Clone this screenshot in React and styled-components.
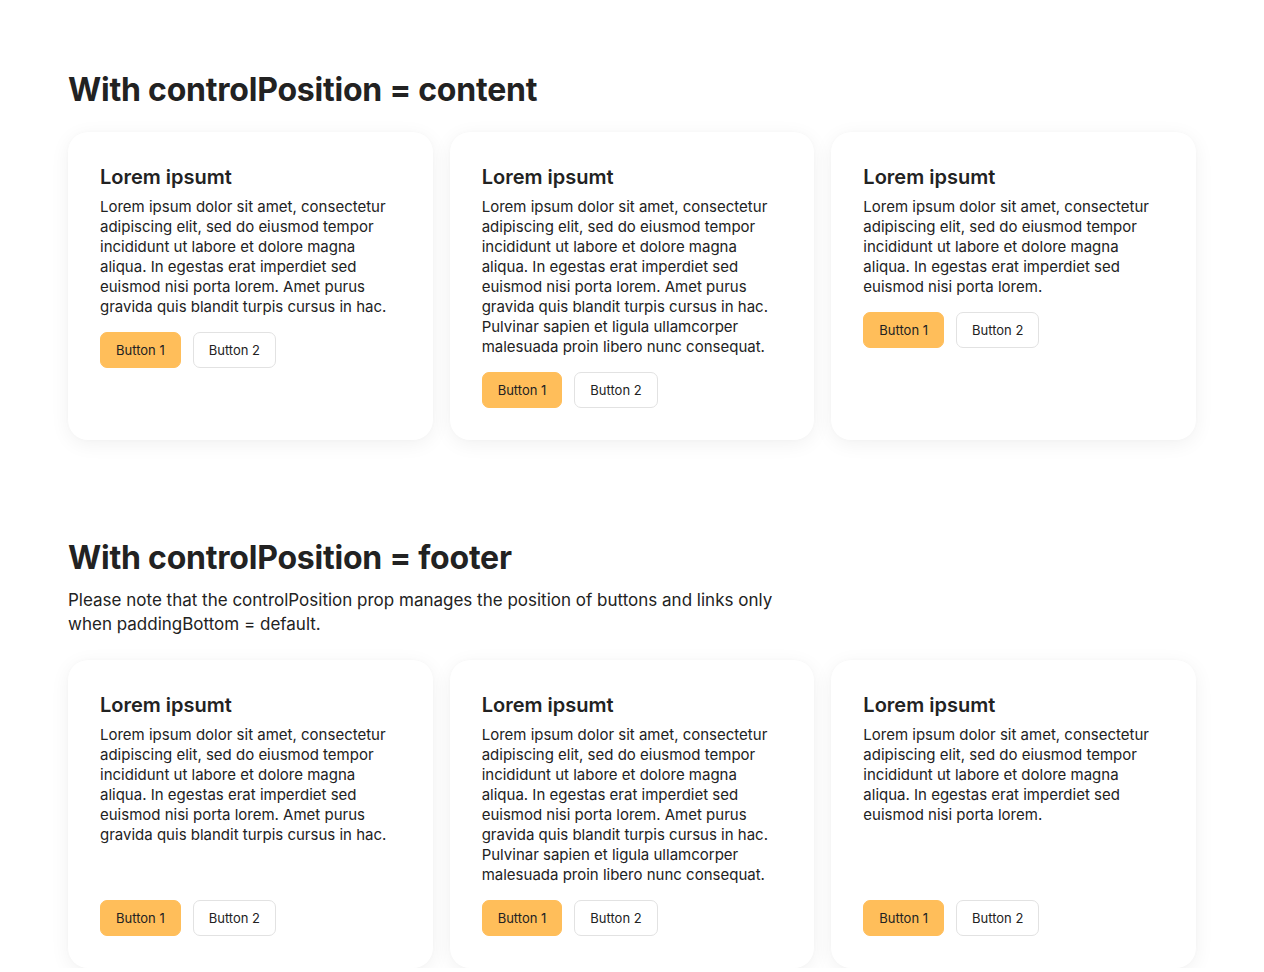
import React from "react";
import styled, { createGlobalStyle } from "styled-components";

const Global = createGlobalStyle`
  html, body { margin: 0; padding: 0; background: #fff; }
  body { font-family: Inter, "Noto Sans", sans-serif; color: #222; }
  * { box-sizing: border-box; }
`;

const Page = styled.div`
  padding: 70px 68px 0;
  display: flex;
  flex-direction: column;
  gap: 98px;
`;

const Section = styled.section`
  display: flex;
  flex-direction: column;
`;

const Heading = styled.h2`
  margin: 0;
  font-size: 32px;
  line-height: 40px;
  font-weight: 700;
  letter-spacing: -0.22px;
  color: #222;
`;

const Note = styled.p`
  margin: 10px 0 0;
  font-size: 17px;
  line-height: 24px;
  max-width: 720px;
  color: #222;
`;

const Grid = styled.div`
  margin-top: ${(p) => (p.$footer ? "24px" : "22px")};
  display: grid;
  grid-template-columns: repeat(3, 1fr);
  gap: 17px;
`;

const Card = styled.div`
  background: #fff;
  border-radius: 20px;
  box-shadow: 0 4px 20px rgba(0, 0, 0, 0.06), 0 0 4px rgba(0, 0, 0, 0.02);
  padding: 32px;
  display: flex;
  flex-direction: column;
`;

const Title = styled.h3`
  margin: 1px 0 0;
  font-size: 20px;
  line-height: 24px;
  font-weight: 600;
  color: #222;
`;

const Body = styled.p`
  margin: 8px 0 0;
  font-size: 15px;
  line-height: 20px;
  color: #222;
`;

const Controls = styled.div`
  display: flex;
  gap: 12px;
  margin-top: ${(p) => (p.$footer ? "auto" : "15px")};
  padding-top: ${(p) => (p.$footer ? "15px" : "0")};
`;

const Button = styled.button`
  height: 36px;
  padding: 0 15px;
  border-radius: 7px;
  font-family: Inter, sans-serif;
  font-size: 13px;
  color: #222;
  cursor: pointer;
  background: ${(p) => (p.$primary ? "#ffbe5a" : "#fff")};
  border: 1px solid ${(p) => (p.$primary ? "#ffbe5a" : "#e2e2e2")};
`;

const short =
  "Lorem ipsum dolor sit amet, consectetur adipiscing elit, sed do eiusmod tempor incididunt ut labore et dolore magna aliqua. In egestas erat imperdiet sed euismod nisi porta lorem.";
const mid = short + " Amet purus gravida quis blandit turpis cursus in hac.";
const long = mid + " Pulvinar sapien et ligula ullamcorper malesuada proin libero nunc consequat.";

const texts = [mid, long, short];

function Cards({ footer }) {
  return (
    <Grid $footer={footer}>
      {texts.map((t, i) => (
        <Card key={i}>
          <Title>Lorem ipsumt</Title>
          <Body>{t}</Body>
          <Controls $footer={footer}>
            <Button $primary>Button 1</Button>
            <Button>Button 2</Button>
          </Controls>
        </Card>
      ))}
    </Grid>
  );
}

export default function App() {
  return (
    <>
      <Global />
      <Page>
        <Section>
          <Heading>With controlPosition = content</Heading>
          <Cards />
        </Section>
        <Section>
          <Heading>With controlPosition = footer</Heading>
          <Note>
            Please note that the controlPosition prop manages the position of buttons and links only
            when paddingBottom = default.
          </Note>
          <Cards footer />
        </Section>
      </Page>
    </>
  );
}
